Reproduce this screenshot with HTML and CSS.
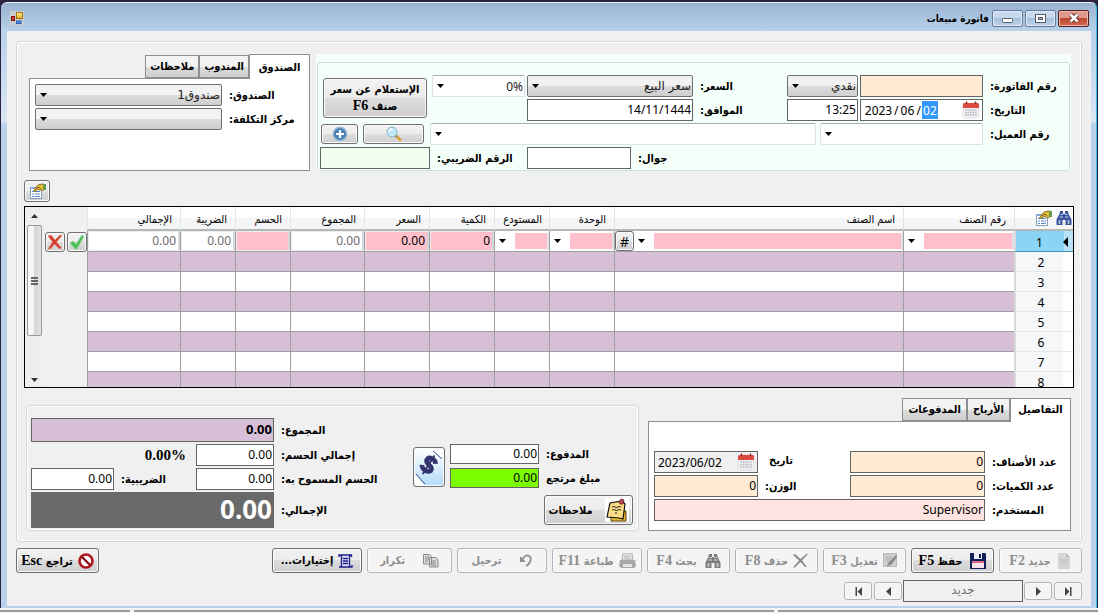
FILE: index.html
```html
<!DOCTYPE html>
<html lang="ar" dir="rtl">
<head>
<meta charset="utf-8">
<title>فاتورة مبيعات</title>
<link rel="stylesheet" href="styles.css">
</head>
<body>
<svg class="defs" aria-hidden="true">
  <defs>
    <linearGradient id="gold" x1="0" y1="0" x2="0" y2="1"><stop offset="0" stop-color="#ffef9a"/><stop offset="1" stop-color="#e8a917"/></linearGradient>
    <symbol id="props" viewBox="0 0 17 16">
      <rect x="1.500" y="4.500" width="11" height="11" fill="#fff" stroke="#8a9cb8"/>
      <path d="M1 4h12v2H1z" fill="#8fa9dd"/>
      <path d="M3 8.500h2M6 8.500h5M3 11h2M6 11h5M3 13.500h2M6 13.500h5" stroke="#5b8ad0"/>
      <path d="M15 1v6l-2.500.5-3.500-1-3 2L4.500 8l2.500-4L10 1.500z" fill="#e6bd35" stroke="#6f5a14" stroke-width=".8"/>
      <path d="M14 1h3v6h-3z" fill="#6a9a45"/>
      <path d="M7 6l3-2 2 2" stroke="#7a5c10" fill="none"/>
    </symbol>
    <symbol id="binoculars" viewBox="0 0 16 14">
      <path d="M4 0h3v3h2V0h3l.6 3L15.500 8.500V14h-6V9h-3v5h-6V8.500L3.400 3z" fill="currentColor"/>
      <path d="M2.500 9h2v4h-2zM11.500 9h2v4h-2z" fill="#fff" opacity=".55"/>
      <path d="M4.500 3.500H7M9 3.500h2.500M3.500 6H7M9 6h3.500" stroke="#fff" opacity=".7"/>
    </symbol>
    <symbol id="calendar" viewBox="0 0 18 18">
      <rect x="1" y="2" width="16" height="15" rx="1.500" fill="#f3f3f5" stroke="#d4d4d8" stroke-width=".6"/>
      <path d="M1 3.500A1.500 1.500 0 0 1 2.500 2h13A1.500 1.500 0 0 1 17 3.500V7H1z" fill="#dd4b3e"/>
      <path d="M4.500.5v2.500M13.500.5v2.500" stroke="#8b2a22" stroke-width="1.400"/>
      <path d="M3 9h12M3 11.500h12M3 14h12" stroke="#b9bcc4" stroke-width="1.500" stroke-dasharray="1.800 .7"/>
    </symbol>
  </defs>
</svg>

<div class="window">
  <header class="titlebar">
    <div class="controls">
      <button class="control close" aria-label="إغلاق"><svg width="12" height="10" viewBox="0 0 12 10"><path d="M2.500 1.500l7 7M9.500 1.500l-7 7" stroke="#5c2620" stroke-width="4.400"/><path d="M2.500 1.500l7 7M9.500 1.500l-7 7" stroke="#fff" stroke-width="2.600"/></svg></button>
      <button class="control" aria-label="تكبير"><svg width="11" height="9" viewBox="0 0 11 9"><rect x=".5" y=".5" width="10" height="8" fill="#fff" stroke="#555c66"/><rect x="3.500" y="3.500" width="4" height="2" fill="#9db4cf" stroke="#555c66"/></svg></button>
      <button class="control" aria-label="تصغير"><svg width="11" height="9" viewBox="0 0 11 9"><rect x=".5" y="4.500" width="10" height="4" rx="1" fill="#fff" stroke="#555c66"/></svg></button>
    </div>
    <h1 class="title">فاتورة مبيعات</h1>
    <svg class="app-icon" width="14" height="14" viewBox="0 0 14 14"><rect width="14" height="14" fill="#c9ccd0"/><rect x="6.500" y="1.500" width="6" height="6" fill="url(#gold)" stroke="#a37a10"/><rect x="1.500" y="5.500" width="3" height="4" fill="#d43b2f" stroke="#7e1710"/><rect x="6.500" y="10" width="4.500" height="2.500" fill="#5b93e8" stroke="#2c5db5"/></svg>
  </header>

  <main class="client">
    <section class="sheet">
      <div class="top">
        <div class="invoice">
          <div class="invoice-box">
            <div class="split">
              <div class="rows">
                <div class="row">
                  <label class="label l-main" for="no">رقم الفاتورة:</label>
                  <input id="no" class="field w-date cream">
                  <select class="drop w-time" aria-label="طريقة الدفع"><option>نقدي</option></select>
                  <label class="label l-price" for="price">السعر:</label>
                  <select id="price" class="drop grow"><option>سعر البيع</option></select>
                  <select class="drop plain w-pct" aria-label="النسبة"><option>0%</option></select>
                </div>
                <div class="row">
                  <label class="label l-main" for="day">التاريخ:</label>
                  <div class="field date w-date" dir="ltr">
                    <input class="seg year" aria-label="السنة" value="2023"><span>/</span><input class="seg" aria-label="الشهر" value="06"><span>/</span><input id="day" class="seg active" value="02">
                    <svg class="cal" width="18" height="18"><use href="#calendar"/></svg>
                  </div>
                  <input class="field w-time" aria-label="الوقت" value="13:25">
                  <label class="label l-price" for="hijri">الموافق:</label>
                  <input id="hijri" class="field grow" value="14/11/1444">
                  <span class="w-pct"></span>
                </div>
              </div>
              <button class="btn inquiry">الإستعلام عن سعر<span>صنف <b class="key">F6</b></span></button>
            </div>
            <div class="row">
              <label class="label l-main" for="cust">رقم العميل:</label>
              <select id="cust" class="drop plain w-cust"><option></option></select>
              <select class="drop plain grow cust-name" aria-label="اسم العميل"><option></option></select>
              <button class="btn w-search" aria-label="بحث"><svg width="18" height="16" viewBox="0 0 18 16"><path d="M10.500 9.500l5.500 5" stroke="#e0a33c" stroke-width="3"/><path d="M9.500 9l2 2" stroke="#8d8d8d" stroke-width="2"/><circle cx="7" cy="6" r="5" fill="#c3e9fb" stroke="#8ab6cf"/><path d="M4 5.500A3 3 0 0 1 7 3" stroke="#fff" stroke-width="1.400" fill="none"/></svg></button>
              <button class="btn w-add" aria-label="إضافة"><svg width="16" height="16" viewBox="0 0 16 16"><circle cx="8" cy="8" r="6.800" fill="#4a82b5" stroke="#9dbfdc" stroke-width="1.400"/><path d="M8 4v8M4 8h8" stroke="#fff" stroke-width="2.200"/></svg></button>
            </div>
            <div class="row">
              <span class="grow"></span>
              <label class="label l-phone" for="phone">جوال:</label>
              <input id="phone" class="field w-phone">
              <label class="label l-tax" for="taxno">الرقم الضريبي:</label>
              <input id="taxno" class="field w-tax mint">
            </div>
          </div>
        </div>

        <div class="tabs cash">
          <div class="tablist" role="tablist">
            <button class="tab on" role="tab" aria-selected="true">الصندوق</button>
            <button class="tab" role="tab">المندوب</button>
            <button class="tab" role="tab">ملاحظات</button>
          </div>
          <div class="tabpanel" role="tabpanel">
            <div class="row"><label class="label l-cash" for="cash">الصندوق:</label><select id="cash" class="drop grow"><option>صندوق1</option></select></div>
            <div class="row"><label class="label l-cash" for="cost">مركز التكلفة:</label><select id="cost" class="drop grow"><option></option></select></div>
          </div>
        </div>
      </div>

      <div class="tools"><button class="btn w-props" aria-label="خصائص"><svg width="17" height="16"><use href="#props"/></svg></button></div>

      <div class="gridbox">
        <table class="items">
          <colgroup><col class="c-num"><col class="c-code"><col><col class="c-unit"><col class="c-store"><col class="c-unit"><col class="c-unit"><col class="c-sum"><col class="c-store"><col class="c-store"><col class="c-total"><col class="c-act"></colgroup>
          <thead>
            <tr>
              <th class="corner"><svg class="blue" width="16" height="14"><use href="#binoculars"/></svg><svg width="17" height="16"><use href="#props"/></svg></th>
              <th>رقم الصنف</th><th>اسم الصنف</th><th>الوحدة</th><th class="tight">المستودع</th><th>الكمية</th><th>السعر</th><th>المجموع</th><th>الحسم</th><th>الضريبة</th><th>الإجمالي</th><td class="act"></td>
            </tr>
          </thead>
          <tbody>
            <tr class="edit">
              <th class="num current"><svg class="marker" width="5" height="10" viewBox="0 0 5 10"><path d="M5 0v10L0 5z"/></svg>1</th>
              <td><select class="cell pick" aria-label="رقم الصنف"><option></option></select></td>
              <td><div class="name"><select class="cell pick" aria-label="اسم الصنف"><option></option></select><button class="btn hash">#</button></div></td>
              <td><select class="cell pick" aria-label="الوحدة"><option></option></select></td>
              <td><select class="cell pick" aria-label="المستودع"><option></option></select></td>
              <td><input class="cell pink" aria-label="الكمية" value="0"></td>
              <td><input class="cell pink" aria-label="السعر" value="0.00"></td>
              <td><input class="cell" aria-label="المجموع" value="0.00" readonly></td>
              <td><input class="cell pink" aria-label="الحسم"></td>
              <td><input class="cell" aria-label="الضريبة" value="0.00" readonly></td>
              <td><input class="cell" aria-label="الإجمالي" value="0.00" readonly></td>
              <td class="act"><div class="acts">
                <button class="btn mini" aria-label="موافق"><svg width="16" height="16" viewBox="0 0 16 16"><path d="M1 9l3-2 3 3 6-9 2 1.500L8 15H6z" fill="#4fbf5d" stroke="#8fd998" stroke-width=".7"/></svg></button>
                <button class="btn mini" aria-label="حذف"><svg width="16" height="16" viewBox="0 0 16 16"><path d="M1 2l3-1 4 5 5-5 2 .5L9.500 8l5 6-2 1-5-5-4 5H1l4.500-7z" fill="#d43a28" stroke="#e88a7c" stroke-width=".7"/></svg></button>
              </div></td>
            </tr>
            <tr><th class="num">2</th><td></td><td></td><td></td><td></td><td></td><td></td><td></td><td></td><td></td><td></td><td class="act"></td></tr>
            <tr><th class="num">3</th><td></td><td></td><td></td><td></td><td></td><td></td><td></td><td></td><td></td><td></td><td class="act"></td></tr>
            <tr><th class="num">4</th><td></td><td></td><td></td><td></td><td></td><td></td><td></td><td></td><td></td><td></td><td class="act"></td></tr>
            <tr><th class="num">5</th><td></td><td></td><td></td><td></td><td></td><td></td><td></td><td></td><td></td><td></td><td class="act"></td></tr>
            <tr><th class="num">6</th><td></td><td></td><td></td><td></td><td></td><td></td><td></td><td></td><td></td><td></td><td class="act"></td></tr>
            <tr><th class="num">7</th><td></td><td></td><td></td><td></td><td></td><td></td><td></td><td></td><td></td><td></td><td class="act"></td></tr>
            <tr><th class="num">8</th><td></td><td></td><td></td><td></td><td></td><td></td><td></td><td></td><td></td><td></td><td class="act"></td></tr>
          </tbody>
        </table>
        <div class="scroll" aria-hidden="true">
          <svg width="7" height="4" viewBox="0 0 7 4"><path d="M0 4l3.500-4L7 4z" fill="#333"/></svg>
          <div class="thumb"><i></i><i></i><i></i></div>
          <svg width="7" height="4" viewBox="0 0 7 4"><path d="M0 0h7L3.500 4z" fill="#333"/></svg>
        </div>
      </div>

      <div class="bottom">
        <div class="tabs details">
          <div class="tablist" role="tablist">
            <button class="tab on" role="tab" aria-selected="true">التفاصيل</button>
            <button class="tab" role="tab">الأرباح</button>
            <button class="tab" role="tab">المدفوعات</button>
          </div>
          <div class="tabpanel" role="tabpanel">
            <div class="row">
              <label class="label l-det" for="kinds">عدد الأصناف:</label><input id="kinds" class="field grow cream" value="0">
              <label class="label l-mid up" for="d2">تاريخ</label>
              <div class="field date gray w-d2" dir="ltr"><input id="d2" class="seg whole" value="2023/06/02"><svg class="cal" width="18" height="18"><use href="#calendar"/></svg></div>
            </div>
            <div class="row">
              <label class="label l-det" for="qty">عدد الكميات:</label><input id="qty" class="field grow cream" value="0">
              <label class="label l-mid" for="weight">الوزن:</label><input id="weight" class="field w-d2 cream" value="0">
            </div>
            <div class="row"><label class="label l-det" for="user">المستخدم:</label><input id="user" class="field grow rose" value="Supervisor"></div>
          </div>
        </div>

        <div class="totals">
          <div class="paid">
            <div class="row"><label class="label l-paid" for="paid">المدفوع:</label><input id="paid" class="field short grow" value="0.00"></div>
            <div class="row"><label class="label l-paid" for="back">مبلغ مرتجع</label><input id="back" class="field short grow lime" value="0.00"></div>
            <button class="btn notes"><svg width="24" height="24" viewBox="0 0 24 24"><rect width="24" height="24" fill="#fff"/><path d="M6 13h15v10H6z" fill="#e8b62e" stroke="#5b3c0a"/><path d="M5 5l12-2 3 3-2 15-4-1-12-1z" fill="#fbdc84" stroke="#111" stroke-width="1.200"/><path d="M7 9q2-1 3 0t3 0 3 0M7 12q2-1 3 0t3 0 3 0M10 15h2" stroke="#222" fill="none"/><path d="M14 4l2-3 3 1-1 4-3 0z" fill="#c24a56" stroke="#5c1b22" stroke-width=".8"/></svg>ملاحظات</button>
          </div>
          <button class="btn money" aria-label="دفع"><svg width="28" height="36" viewBox="0 0 28 36"><defs><linearGradient id="sky" x1="0" y1="0" x2="0" y2="1"><stop offset="0" stop-color="#fff"/><stop offset="1" stop-color="#b5dcf8"/></linearGradient></defs><rect width="28" height="36" fill="url(#sky)"/><path d="M0 25l9 11H0zM19 0h9v10z" fill="#fff"/><path d="M1 25l9 10M18 2l9 8" stroke="#3f4c93"/><g transform="rotate(32 14 16)"><path d="M19 11.500Q17 8.500 13 9T9.500 13.500q1 2 5 2.500T18.500 20Q17 23 13 22.500T8 19.500" fill="none" stroke="#34346f" stroke-width="4.600"/><path d="M13.500 5v22" stroke="#34346f" stroke-width="2"/></g></svg></button>
          <div class="sums">
            <div class="row"><label class="label l-sum" for="sum">المجموع:</label><input id="sum" class="field grow sum" value="0.00"></div>
            <div class="row"><label class="label l-sum" for="disc">إجمالي الحسم:</label><input id="disc" class="field w-disc" value="0.00"><span class="pct">0.00%</span></div>
            <div class="row"><label class="label l-sum" for="allow">الحسم المسموح به:</label><input id="allow" class="field w-disc" value="0.00"><label class="label l-vat" for="vat">الضريبية:</label><input id="vat" class="field w-vat" value="0.00"></div>
            <div class="row"><label class="label l-sum" for="grand">الإجمالي:</label><input id="grand" class="field grow grand" value="0.00"></div>
          </div>
        </div>
      </div>
    </section>

    <div class="bar">
      <button class="btn cmd" disabled><svg width="16" height="16" viewBox="0 0 16 16"><path d="M2 0h8l4 4v12H2z" fill="#d6d6d6"/><path d="M10 0l4 4h-4z" fill="#bdbdbd"/><path d="M4 7h8M4 9h8M4 11h8" stroke="#c4c4c4"/></svg><span>جديد <b class="key">F2</b></span></button>
      <button class="btn cmd spread"><svg width="16" height="16" viewBox="0 0 16 16"><path d="M0 0h15l1 1v15H0z" fill="#131e5c"/><path d="M4 0h8v6H4z" fill="#e9edf6"/><path d="M9 1h2v4H9z" fill="#131e5c"/><path d="M2 9h12v6H2z" fill="#fbe3ea"/><path d="M2 8h12v2H2z" fill="#d96a80"/></svg><span>حفظ <b class="key">F5</b></span></button>
      <button class="btn cmd" disabled><svg width="15" height="15" viewBox="0 0 15 15"><rect x=".5" y=".5" width="13" height="13" fill="#cfcfcf" stroke="#bbb"/><path d="M3 4h6M3 6h5M3 8h3" stroke="#aaa"/><path d="M13 2l1 2-6 8-4 1 1-3z" fill="#8a8a8a"/></svg><span>تعديل <b class="key">F3</b></span></button>
      <button class="btn cmd" disabled><svg width="15" height="15" viewBox="0 0 15 15"><path d="M0 2l2-1 5.500 5L14 .5l1 .5-6 6.500 5 6.500h-2l-4.500-5L2 14.500H0l6-7z" fill="#8c8c8c"/></svg><span>حذف <b class="key">F8</b></span></button>
      <button class="btn cmd spread" disabled><svg class="dim" width="16" height="14"><use href="#binoculars"/></svg><span>بحث <b class="key">F4</b></span></button>
      <button class="btn cmd wide" disabled><svg width="17" height="16" viewBox="0 0 17 16"><path d="M4 0h9l1 7H3z" fill="#e0e0e0" stroke="#b5b5b5"/><path d="M5 3h6M5 5h6" stroke="#bbb"/><path d="M1 7h15l1 6-2 2H2l-2-2z" fill="#a8a8a8"/><path d="M4 11h9v3H4z" fill="#e4e4e4"/></svg><span>طباعة <b class="key">F11</b></span></button>
      <button class="btn cmd wide airy" disabled><svg width="13" height="13" viewBox="0 0 13 13"><path d="M3 6q3-5 6-4.500 3.500 1 2.500 5T7 12" stroke="#8f8f8f" stroke-width="1.800" fill="none"/><path d="M1 2v6h6z" fill="#8f8f8f"/></svg><span>ترحيل</span></button>
      <button class="btn cmd repeat airy" disabled><svg width="16" height="15" viewBox="0 0 16 15"><path d="M.5 1.500h6l2 2V11h-8zM6.500 4.500h6l2.500 2V14H6.500z" fill="#dcdcdc" stroke="#8a8a8a"/><path d="M2 4h4M2 6h4M2 8h3M8 8h5M8 10h5M8 12h5" stroke="#8a8a8a"/></svg><span>تكرار</span></button>
      <button class="btn cmd wide"><svg width="15" height="14" viewBox="0 0 15 14"><path d="M3 1.500h9v11H3z" fill="#e4e6fb"/><path d="M1 3V1h12.500v2M3.500 1.500v11M11.500 1.500v11M1 13h13v-2" stroke="#1b1b8c" stroke-width="1.400" fill="none"/><path d="M5 4.500h5M5 7h5M5 9.500h5" stroke="#1b1b8c" stroke-width="1.300"/></svg><span>إختيارات...</span></button>
      <button class="btn cmd undo"><svg width="16" height="16" viewBox="0 0 16 16"><circle cx="8" cy="8" r="6.500" fill="#fff" stroke="#b0141c" stroke-width="2.600"/><path d="M3.500 3.500l9 9" stroke="#8c1016" stroke-width="2.400"/></svg><span>تراجع <b class="key">Esc</b></span></button>
    </div>

    <nav class="pager" aria-label="التنقل بين الفواتير">
      <button class="btn page" aria-label="الأخير"><svg width="9" height="9" viewBox="0 0 9 9"><path d="M1 0v9l4.500-4.500zM6 0h1.500v9H6z"/></svg></button>
      <button class="btn page" aria-label="التالي"><svg width="9" height="9" viewBox="0 0 9 9"><path d="M2 0v9l5-4.500z"/></svg></button>
      <input class="field pos" aria-label="الموضع" value="جديد" readonly>
      <button class="btn page" aria-label="السابق"><svg width="9" height="9" viewBox="0 0 9 9"><path d="M7 0v9L2 4.500z"/></svg></button>
      <button class="btn page" aria-label="الأول"><svg width="9" height="9" viewBox="0 0 9 9"><path d="M8 0v9L3.500 4.500zM1.500 0H3v9H1.500z"/></svg></button>
    </nav>
  </main>
</div>
<footer class="under"><span></span><span></span><span></span></footer>
</body>
</html>
```
FILE: styles.css
```css
* { box-sizing: border-box; }

body {
  margin: 0;
  min-height: 100vh;
  display: flex;
  flex-direction: column;
  background: #2c2340;
  color: #000;
  font: 12px "Noto Sans", "DejaVu Sans", sans-serif;
}

button, input, select { font: inherit; color: inherit; margin: 0; }
svg { flex: none; display: block; }
.defs { position: absolute; width: 0; height: 0; }

/* window frame */
.window {
  flex: 1;
  display: flex;
  flex-direction: column;
  margin: 2px 1px 0;
  padding: 0 5px 2px 6px;
  border-top: 1px solid #e6f0fa;
  border-right: 1px solid #35c3ea;
  border-radius: 6px 6px 0 0;
  background: linear-gradient(#99b4d1, #b9d1ea 28px, #d9e6f5 118px, #b9d1ea 122px);
}

.titlebar {
  display: flex;
  align-items: center;
  height: 28px;
  padding: 2px 2px 0 3px;
}
.controls { display: flex; gap: 2px; }
.control {
  width: 31px;
  height: 17px;
  padding: 0;
  display: flex;
  align-items: center;
  justify-content: center;
  border: 1px solid #64799a;
  border-radius: 2px;
  box-shadow: inset 0 0 0 1px #dfeaf6;
  background: linear-gradient(#c5d8ec 50%, #a4bfdc 50%, #bdd4ec);
}
.close {
  border-color: #5b1c1c;
  box-shadow: inset 0 0 0 1px #e9b5ad;
  background: linear-gradient(#e0988c 45%, #bb4331 45%, #d16c52);
}
.title {
  margin: 0 3px 0 auto;
  font: bold 10px "DejaVu Sans Condensed", "DejaVu Sans", sans-serif;
}

.client { flex: 1; padding: 10px 9px 0; background: #f0f0f0; }

.sheet {
  padding: 12px 7px 10px;
  border: 1px solid #d0dbe3;
  border-radius: 3px;
  box-shadow: inset 0 0 0 1px #fff;
}

/* shared controls */
.row { display: flex; align-items: center; gap: 2px; }
.grow { flex: 1; min-width: 0; }

.label {
  flex: none;
  padding-left: 5px;
  text-align: left;
  white-space: nowrap;
  font: bold 11px "DejaVu Sans Condensed", "DejaVu Sans", sans-serif;
}

.field {
  height: 22px;
  padding: 0 1px 2px;
  border: 1px solid #646464;
  border-radius: 0;
  background: #fff;
  text-align: right;
  direction: ltr;
}
.field.short { height: 20px; }
.cream { background: #ffebd3; }
.mint { background: #f0fff0; }
.rose { background: #ffe4e1; }
.lime { background: #7cfc00; }
.gray { background: #f0f0f0; }

.drop {
  appearance: none;
  height: 22px;
  padding: 0 1px 0 18px;
  border: 1px solid #707070;
  border-radius: 2px;
  font-family: "DejaVu Sans", sans-serif;
  font-size: 12px;
  color: #222;
  background: url("data:image/svg+xml,%3Csvg xmlns='http://www.w3.org/2000/svg' width='7' height='4'%3E%3Cpath d='M0 0h7L3.500 4z'/%3E%3C/svg%3E") no-repeat 4px 8px,
    linear-gradient(#f2f2f2 50%, #dcdcdc 50%, #cfcfcf);
}
.drop.plain {
  border-color: #abadb3 #dbe3ea #dbe3ea;
  font: 12px "Noto Sans", sans-serif;
  background-color: #fff;
  background-image: url("data:image/svg+xml,%3Csvg xmlns='http://www.w3.org/2000/svg' width='7' height='4'%3E%3Cpath d='M0 0h7L3.500 4z'/%3E%3C/svg%3E");
}

.btn {
  flex: none;
  display: flex;
  align-items: center;
  justify-content: center;
  padding: 0;
  border: 1px solid #707070;
  border-radius: 3px;
  box-shadow: inset 0 0 0 1px #fafafa;
  background: linear-gradient(#f2f2f2, #ebebeb 50%, #dddddd 50%, #cfcfcf);
  font: bold 11px "DejaVu Sans Condensed", "DejaVu Sans", sans-serif;
}
.key { font: bold 14px "Liberation Serif", serif; }

/* date box */
.date { display: flex; align-items: center; padding: 0 2px 0 3px; font-size: 12px; }
.date span { padding: 0 1px; }
.seg {
  width: 16px;
  height: 18px;
  padding: 0;
  border: 0;
  background: transparent;
  text-align: center;
}
.year { width: 29px; }
.whole { width: 76px; text-align: left; }
.active { background: #3399ff; color: #fff; }
.cal { margin-left: auto; }

/* invoice header */
.top { display: flex; gap: 6px; padding: 0 3px 0 5px; }
.invoice { flex: 1; min-width: 0; padding: 8px 1px 0; background: #f5fffa; }
.invoice-box {
  display: flex;
  flex-direction: column;
  gap: 2px;
  padding: 12px 0 1px 2px;
  border: 1px solid #d0dbe3;
  border-radius: 3px;
}
.split { display: flex; gap: 5px; padding-left: 3px; }
.rows { flex: 1; min-width: 0; display: flex; flex-direction: column; gap: 2px; }
.inquiry { flex-direction: column; align-self: center; width: 104px; height: 40px; line-height: 16px; }
.l-main { width: 84px; }
.l-price { width: 90px; }
.w-date { width: 123px; }
.w-time { width: 71px; }
.w-pct { width: 93px; }
.w-cust { width: 163px; }
.cust-name { margin: 0 2px 0 4px; }
.w-search { width: 61px; height: 20px; margin-left: 3px; }
.w-add { width: 37px; height: 20px; margin-left: 1px; }
.l-phone { width: 60px; }
.w-phone { width: 104px; }
.l-tax { width: 93px; }
.w-tax { width: 110px; }

/* tabs */
.tabs { display: flex; flex: none; flex-direction: column; }
.tablist { display: flex; align-items: flex-end; }
.tab {
  height: 23px;
  padding: 0 5px;
  border: 1px solid #8c8e94;
  border-radius: 0;
  background: linear-gradient(#f3f3f3 50%, #dcdcdc 50%, #d0d0d0);
  font: bold 11px "DejaVu Sans Condensed", "DejaVu Sans", sans-serif;
  white-space: nowrap;
}
.tab.on {
  position: relative;
  width: 61px;
  height: 25px;
  padding: 0 4px 3px;
  margin-bottom: -1px;
  border-bottom: 0;
  background: #fff;
}
.tabpanel {
  flex: 1;
  display: flex;
  flex-direction: column;
  gap: 2px;
  border: 1px solid #8c8e94;
  background: #fff;
}
.cash { width: 281px; }
.cash .tab { padding: 0 4px; }
.cash .tabpanel { padding: 5px; }
.l-cash { width: 80px; }

.tools { display: flex; justify-content: flex-end; margin: 9px 0 4px; }
.w-props { width: 26px; height: 22px; }

/* items grid */
.gridbox {
  display: flex;
  height: 182px;
  overflow: hidden;
  border: 1px solid #000;
}
.items {
  flex: 1;
  width: 0;
  align-self: flex-start;
  border-spacing: 0;
  table-layout: fixed;
}
.c-num { width: 59px; }
.c-code { width: 111px; }
.c-unit { width: 65px; }
.c-store { width: 55px; }
.c-sum { width: 74px; }
.c-total { width: 93px; }
.c-act { width: 45px; }
.items th {
  font: 11px "DejaVu Sans Condensed", "DejaVu Sans", sans-serif;
}
.items thead th {
  height: 24px;
  padding: 2px 8px 0;
  text-align: right;
  border-left: 1px solid #e2e6ea;
  border-bottom: 2px solid #b4b8b4;
  background: linear-gradient(#fff 50%, #f4f5f7 50%);
}
.items thead .tight { padding: 2px 7px 0 0; }
.items thead .corner { padding: 0 1px 0 0; }
.corner svg { display: inline-block; margin-left: 4px; vertical-align: middle; }
.blue { color: #38549c; }
.dim { color: #7c7c7c; }
.items td {
  height: 20px;
  padding: 0;
  border-left: 1px solid #a0a0a0;
  border-bottom: 1px solid #a0a0a0;
  background: #fff;
}
.items tbody tr:nth-child(even) td { background: #d8bfd8; }
.items tbody .num {
  height: 20px;
  padding: 3px 7px 0 0;
  border-left: 2px solid #d8dade;
  border-bottom: 1px solid #e4e6ea;
  background: linear-gradient(to left, #fff 10px, #f6f7f9 10px);
  font: 12px/16px "Noto Sans", sans-serif;
}
.items tbody .current {
  border-bottom: 1px solid #4c8fb0;
  background: linear-gradient(to left, #b8e2f7 9px, #8ad4f5 9px);
}
.marker { float: right; margin: 2px -2px 0 0; }
.items .act, .items tbody tr:nth-child(even) .act { border: 0; background: #f0f0f0; }

.cell {
  display: block;
  width: 100%;
  height: 20px;
  padding: 0 2px 2px;
  border: 1px solid #eceef2;
  border-right: 2px solid #d4d7dc;
  border-radius: 2px;
  background: #fff;
  color: #6d6d6d;
  text-align: right;
  direction: ltr;
}
.cell.pink { background: #ffc0cb; color: #000; }
.cell.pick {
  appearance: none;
  border: 2px solid #fff;
  border-right: 2px solid #e0e2e8;
  background: url("data:image/svg+xml,%3Csvg xmlns='http://www.w3.org/2000/svg' width='7' height='4'%3E%3Cpath d='M0 0h7L3.500 4z'/%3E%3C/svg%3E") no-repeat 2px 6px,
    linear-gradient(to right, #fff 18px, #ffc0cb 18px);
}
.name { display: flex; }
.name .cell { flex: 1; width: 0; }
.hash { width: 19px; height: 20px; font: 14px "Noto Sans", sans-serif; }
.acts { display: flex; gap: 2px; }
.mini { width: 20px; height: 20px; }

.scroll {
  width: 16px;
  margin-left: 1px;
  padding: 7px 0 5px;
  display: flex;
  flex-direction: column;
  align-items: center;
  background: #eee;
}
.thumb {
  width: 15px;
  height: 111px;
  margin: 7px 0 auto;
  display: flex;
  flex-direction: column;
  align-items: center;
  justify-content: center;
  gap: 1px;
  border: 1px solid #9a9a9a;
  border-radius: 2px;
  background: linear-gradient(to right, #f6f6f6 45%, #d6d6d9 50%, #e2e2e4);
}
.thumb i { width: 7px; height: 2px; background: #666; }

/* lower area */
.bottom { display: flex; gap: 9px; margin-top: 10px; padding: 0 3px 0 2px; }
.details { width: 423px; }
.details .tabpanel { padding: 29px 5px 9px; }
.details .tab.on { height: 24px; }
.l-det { width: 78px; }
.l-mid { width: 88px; }
.l-mid.up { padding: 0 0 4px 9px; }
.w-d2 { width: 104px; }

.totals {
  flex: 1;
  display: flex;
  align-self: flex-start;
  margin-top: 7px;
  padding: 12px 5px 2px 4px;
  border: 1px solid #d0dbe3;
  border-radius: 3px;
  box-shadow: inset 0 0 0 1px #fff;
}
.paid {
  width: 183px;
  display: flex;
  flex-direction: column;
  gap: 4px;
  padding-top: 26px;
}
.l-paid { width: 92px; }
.notes { width: 89px; height: 30px; margin-top: 3px; gap: 12px; }
.money { width: 32px; height: 40px; margin: 29px 5px 0 0; }
.sums { flex: 1; display: flex; flex-direction: column; gap: 2px; }
.l-sum { flex: 1; }
.sums .grow { flex: none; width: 243px; }
.sum { height: 24px; background: #d8bfd8; font-weight: bold; font-size: 13px; }
.w-disc { width: 78px; }
.pct { width: 163px; direction: ltr; text-align: right; padding-right: 8px; font: bold 15px "Liberation Serif", serif; }
.l-vat { width: 78px; }
.w-vat { width: 83px; }
.grand {
  height: 36px;
  border-color: #696969;
  background: #696969;
  color: #fff;
  font: bold 26px "Noto Sans", sans-serif;
}

/* command bar */
.bar { display: flex; gap: 5px; margin-top: 6px; }
.cmd { width: 83px; height: 25px; gap: 5px; white-space: nowrap; }
.wide { width: 90px; }
.repeat { width: 85px; }
.spread { gap: 8px; }
.airy { gap: 18px; }
.undo { margin-right: auto; }
.cmd:disabled {
  border-color: #b4b4b4;
  background: #f4f4f4;
  color: #8e8e8e;
}

.pager { display: flex; align-items: center; gap: 1px; margin-top: 7px; }
.page { width: 28px; height: 18px; border-color: #adb2b5; background: #f4f4f4; }
.page + .page { margin-right: 1px; }
.page path { fill: #444; }
.pos {
  width: 120px;
  background: #f0f0f0;
  color: #6d6d6d;
  text-align: center;
  font-family: "DejaVu Sans", sans-serif;
}

/* edge of the window below */
.under { display: flex; gap: 4px; height: 5px; padding-top: 2px; background: #f4f4f4; }
.under span { width: 320px; border-top: 2px solid #9a9a9a; }
.under span:nth-child(2) { flex: 1; }
.under span:last-child { width: 130px; }
```
